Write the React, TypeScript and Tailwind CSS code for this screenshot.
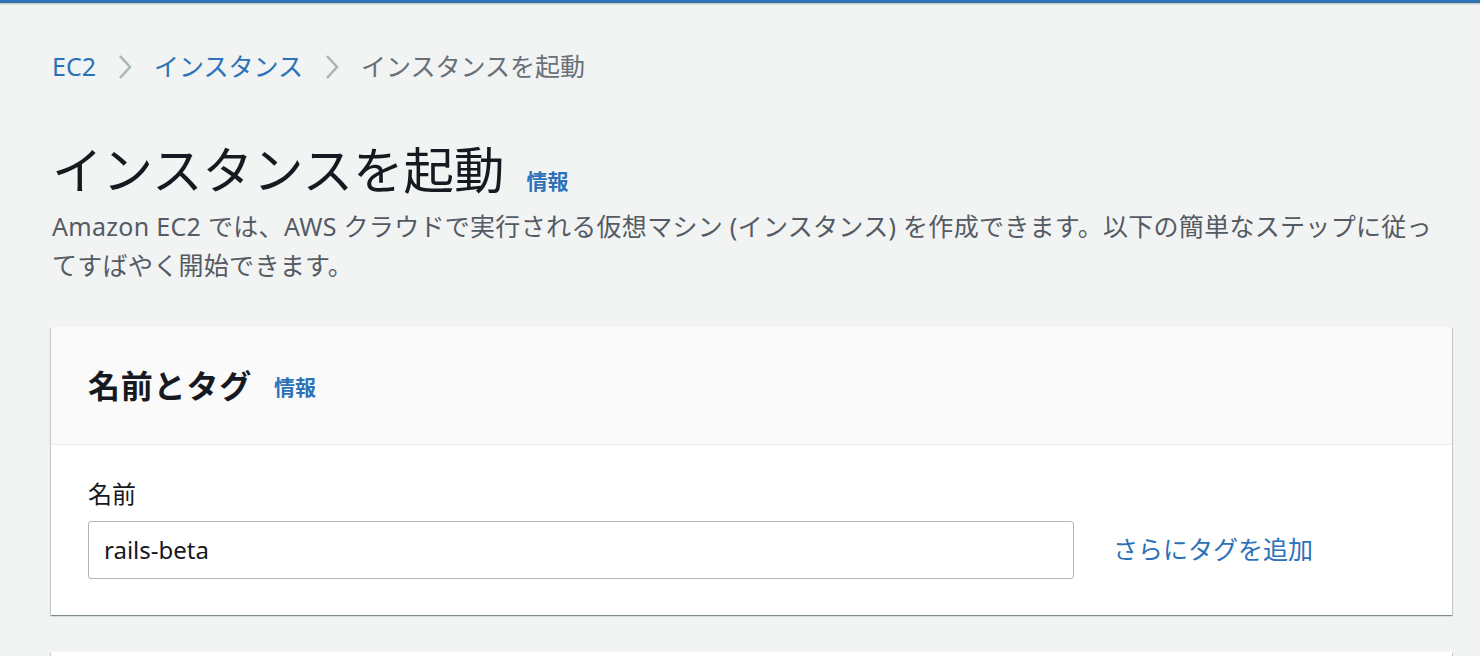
const font = '"Noto Sans", "Noto Sans CJK JP", sans-serif'

function Chevron() {
  return (
    <svg width="18" height="28" viewBox="0 0 18 28" className="mx-[20px]">
      <polyline points="4,3 14,14 4,25" fill="none" stroke="#aab7b8" strokeWidth="2.6" />
    </svg>
  )
}

export default function App() {
  return (
    <div className="min-h-screen bg-[#f2f3f3]" style={{ fontFamily: font }}>
      <div className="h-[3px] bg-[#2f72b6] shadow-[0_1px_2px_rgba(0,0,0,0.25)]" />

      <div className="pl-[52px] pr-[28px] pt-[46px]">
        {/* breadcrumb */}
        <nav className="flex items-center h-[36px] text-[25px]">
          <a className="text-[#2b72b8]">EC2</a>
          <Chevron />
          <a className="text-[#2b72b8]">インスタンス</a>
          <Chevron />
          <span className="text-[#687078]">インスタンスを起動</span>
        </nav>

        {/* title */}
        <div className="flex items-baseline mt-[55px]">
          <h1 className="text-[50.5px] leading-[60px] text-[#16191f] font-normal">インスタンスを起動</h1>
          <a className="ml-[22px] text-[21px] font-bold text-[#2b72b8]">情報</a>
        </div>
        <p className="mt-[7px] text-[25px] leading-[39px] tracking-[0.3px] text-[#545b64]">
          Amazon EC2 では、AWS クラウドで実行される仮想マシン (インスタンス) を作成できます。以下の簡単なステップに従ってすばやく開始できます。
        </p>

        {/* card */}
        <section className="mt-[42px] -ml-px bg-white shadow-[0_1px_1px_0_rgba(0,28,36,0.3),1px_1px_1px_0_rgba(0,28,36,0.15),-1px_1px_1px_0_rgba(0,28,36,0.15)]">
          <header className="h-[118px] bg-[#fafafa] border-b border-[#eaeded] flex items-center px-[37px]">
            <h2 className="text-[32px] tracking-[0.8px] font-bold text-[#16191f]">名前とタグ</h2>
            <a className="ml-[22px] mt-[4px] text-[21px] font-bold text-[#2b72b8]">情報</a>
          </header>
          <div className="px-[37px] pt-[34px] pb-[36px]">
            <label className="block text-[24px] leading-[30px] text-[#16191f]">名前</label>
            <div className="mt-[12px] flex items-center">
              <div className="w-[986px] h-[58px] border border-[#aab7b8] rounded-[3px] flex items-center px-[15px] text-[24px] text-[#16191f]">
                rails-beta
              </div>
              <a className="ml-[39px] text-[25px] text-[#2b72b8]">さらにタグを追加</a>
            </div>
          </div>
        </section>

        <section className="mt-[37px] -ml-px h-[40px] bg-white shadow-[0_1px_1px_0_rgba(0,28,36,0.3),1px_1px_1px_0_rgba(0,28,36,0.15),-1px_1px_1px_0_rgba(0,28,36,0.15)]" />
      </div>
    </div>
  )
}
